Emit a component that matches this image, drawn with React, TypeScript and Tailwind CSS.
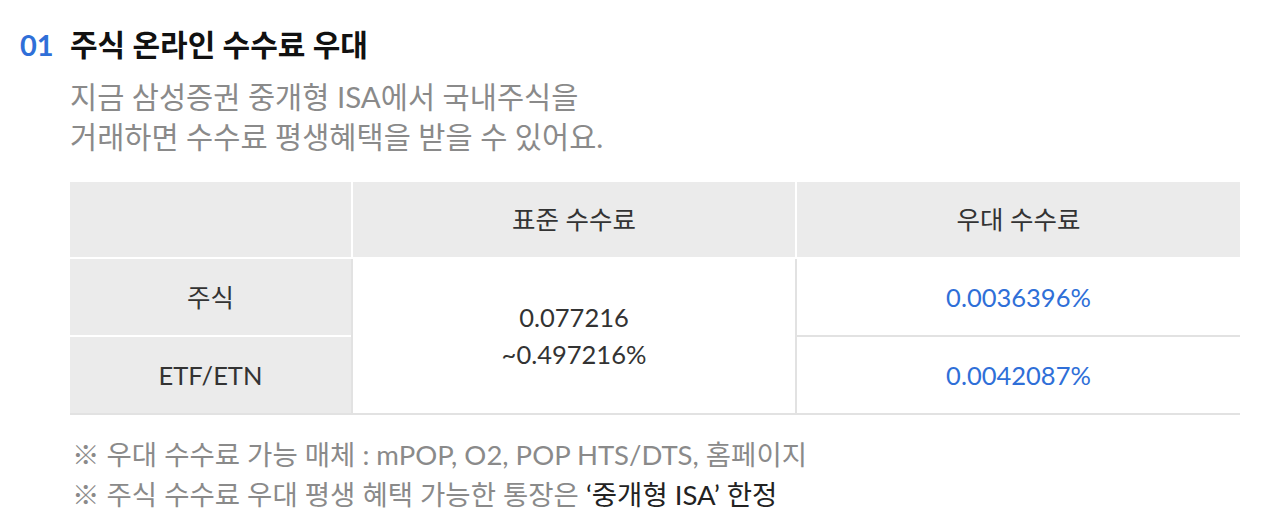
import React from "react";

const font = { fontFamily: "Lato, 'Noto Sans CJK KR', sans-serif" };

export default function App() {
  return (
    <div className="w-[1264px] h-[532px] bg-white overflow-hidden" style={font}>
      <div className="pl-[20px] pr-[24px] pt-[26px]">
        <div className="flex items-center h-[36px]">
          <span className="w-[50px] text-[29px] font-bold text-[#2f6fd8] leading-none">01</span>
          <span className="text-[30px] font-bold text-[#111] leading-none">주식 온라인 수수료 우대</span>
        </div>
        <div className="ml-[50px] mt-[15px] text-[29.5px] leading-[40px] text-[#8a8a8a]">
          <p>지금 삼성증권 중개형 ISA에서 국내주식을</p>
          <p>거래하면 수수료 평생혜택을 받을 수 있어요.</p>
        </div>
        <div className="ml-[50px] mt-[25px] w-[1170px] text-[25.5px] text-[#333]">
          <div className="grid grid-cols-[281px_442px_443px] gap-x-[2px] h-[75px]">
            <div className="bg-[#ebebeb]" />
            <div className="bg-[#ebebeb] flex items-center justify-center">표준 수수료</div>
            <div className="bg-[#ebebeb] flex items-center justify-center">우대 수수료</div>
          </div>
          <div className="grid grid-cols-[283px_444px_443px] mt-[2px] h-[156px] border-b-2 border-[#e2e2e2]">
            <div className="flex flex-col gap-y-[2px] border-r-2 border-[#e2e2e2]">
              <div className="flex-1 bg-[#ebebeb] flex items-center justify-center">주식</div>
              <div className="flex-1 bg-[#ebebeb] flex items-center justify-center">ETF/ETN</div>
            </div>
            <div className="flex flex-col items-center justify-center border-r-2 border-[#e2e2e2] leading-[37px]">
              <span>0.077216</span>
              <span>~0.497216%</span>
            </div>
            <div className="flex flex-col text-[#2f6fd8]">
              <div className="flex-1 flex items-center justify-center border-b-2 border-[#e2e2e2]">0.0036396%</div>
              <div className="flex-1 flex items-center justify-center">0.0042087%</div>
            </div>
          </div>
        </div>
        <div className="ml-[52px] mt-[20px] text-[27.5px] leading-[40px] text-[#8a8a8a]">
          <p>※ 우대 수수료 가능 매체 : mPOP, O2, POP HTS/DTS, 홈페이지</p>
          <p>
            ※ 주식 수수료 우대 평생 혜택 가능한 통장은 <span className="text-[#222]">‘중개형 ISA’ 한정</span>
          </p>
        </div>
      </div>
    </div>
  );
}
